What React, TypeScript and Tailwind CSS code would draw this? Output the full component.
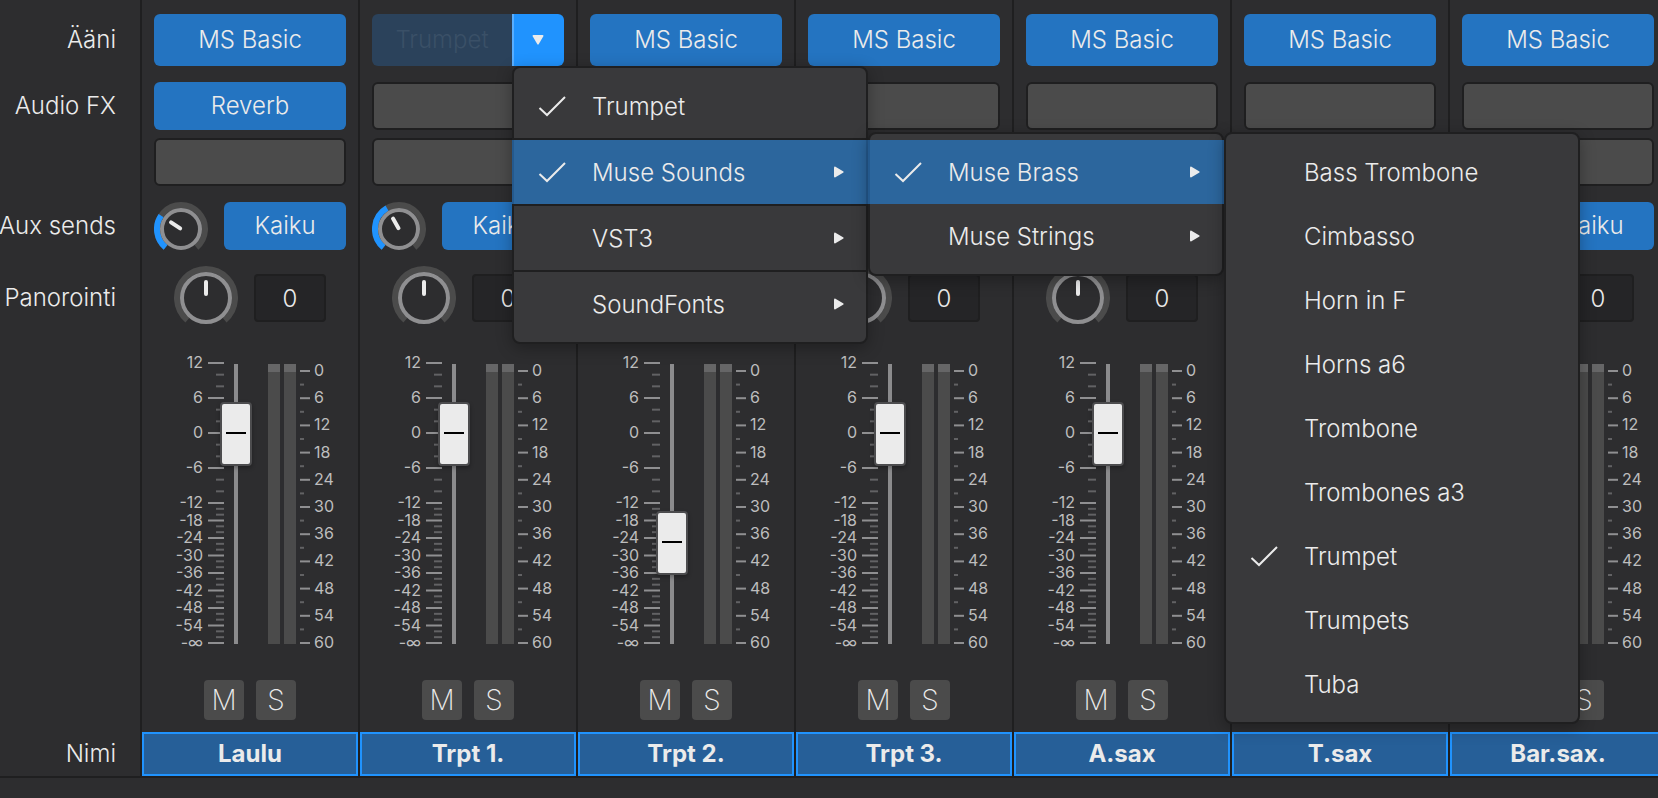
import { useState } from 'react';
import clsx from 'clsx';

interface ChannelData {
  name: string;
  sound: string;
  fx: string[];
  send: number;
  volume: number;
  pan: number;
  open?: boolean;
}

interface MenuEntry {
  label: string;
  checked?: boolean;
  highlighted?: boolean;
  submenu?: boolean;
}

const channels: ChannelData[] = [
  { name: 'Laulu', sound: 'MS Basic', fx: ['Reverb', ''], send: -56, volume: 75, pan: 0 },
  { name: 'Trpt 1.', sound: 'Trumpet', fx: ['', ''], send: -30, volume: 75, pan: 0, open: true },
  { name: 'Trpt 2.', sound: 'MS Basic', fx: ['', ''], send: -30, volume: 36, pan: 0 },
  { name: 'Trpt 3.', sound: 'MS Basic', fx: ['', ''], send: -30, volume: 75, pan: 0 },
  { name: 'A.sax', sound: 'MS Basic', fx: ['', ''], send: -30, volume: 75, pan: 0 },
  { name: 'T.sax', sound: 'MS Basic', fx: ['', ''], send: -30, volume: 75, pan: 0 },
  { name: 'Bar.sax.', sound: 'MS Basic', fx: ['', ''], send: -30, volume: 75, pan: 0 },
];

const soundMenu: MenuEntry[] = [
  { label: 'Trumpet', checked: true },
  { label: 'Muse Sounds', checked: true, highlighted: true, submenu: true },
  { label: 'VST3', submenu: true },
  { label: 'SoundFonts', submenu: true },
];

const museMenu: MenuEntry[] = [
  { label: 'Muse Brass', checked: true, highlighted: true, submenu: true },
  { label: 'Muse Strings', submenu: true },
];

const brassMenu: MenuEntry[] = [
  { label: 'Bass Trombone' },
  { label: 'Cimbasso' },
  { label: 'Horn in F' },
  { label: 'Horns a6' },
  { label: 'Trombone' },
  { label: 'Trombones a3' },
  { label: 'Trumpet', checked: true },
  { label: 'Trumpets' },
  { label: 'Tuba' },
];

// The fader scale is twice as dense below -12 dB
const faderMarks = ['12', '6', '0', '-6', '-12', '-18', '-24', '-30', '-36', '-42', '-48', '-54', '-∞'].map(
  (label, i) => ({ label, y: i <= 4 ? i * 35 : 140 + (i - 4) * 17.5 })
);

const meterMarks = Array.from({ length: 11 }, (_, i) => ({ label: String(i * 6), y: i * 27.2 }));

function polar(cx: number, cy: number, r: number, deg: number) {
  const rad = ((deg - 90) * Math.PI) / 180;
  return `${(cx + r * Math.cos(rad)).toFixed(2)} ${(cy + r * Math.sin(rad)).toFixed(2)}`;
}

function arc(c: number, r: number, from: number, to: number) {
  const large = to - from > 180 ? 1 : 0;
  return `M${polar(c, c, r, from)} A${r} ${r} 0 ${large} 1 ${polar(c, c, r, to)}`;
}

function SendKnob({ angle, label }: { angle: number; label: string }) {
  return (
    <svg
      width="54"
      height="54"
      viewBox="0 0 54 54"
      fill="none"
      role="slider"
      aria-label={label}
      aria-valuenow={angle}
      className="shrink-0"
    >
      <path d={arc(27, 24, -140, 140)} stroke="#4b4b4b" strokeWidth="6" />
      <path d={arc(27, 24, -140, angle)} stroke="#2093fe" strokeWidth="6" />
      <circle cx="27" cy="27" r="19" stroke="#8f8f91" strokeWidth="4" />
      <path
        d="M27 15V26"
        transform={`rotate(${angle} 27 27)`}
        stroke="#ebebeb"
        strokeWidth="4"
        strokeLinecap="round"
      />
    </svg>
  );
}

function PanKnob({ value, label }: { value: number; label: string }) {
  return (
    <svg
      width="64"
      height="64"
      viewBox="0 0 64 64"
      fill="none"
      role="slider"
      aria-label={label}
      aria-valuenow={value}
      className="shrink-0"
    >
      <path d={arc(32, 29, -140, 140)} stroke="#4b4b4b" strokeWidth="6" />
      <circle cx="32" cy="32" r="24" stroke="#8f8f91" strokeWidth="4" />
      <path d="M32 16V28" stroke="#ebebeb" strokeWidth="4" strokeLinecap="round" />
    </svg>
  );
}

function FaderScale() {
  return (
    <svg width="62" height="344" viewBox="0 0 62 344" className="shrink-0 text-base font-normal">
      {faderMarks.map(({ label, y }, i) => {
        const step = i < 4 ? 35 : 17.5;
        return (
          <g key={label}>
            <text x="41" y={y + 36} textAnchor="end" fill="#bdbdbe">
              {label}
            </text>
            <rect x="46" y={y + 30} width="16" height="2" fill="#8f8f91" />
            {i < 12 &&
              [1, 2].map((n) => (
                <rect key={n} x="54" y={y + 30 + (step * n) / 3} width="8" height="2" fill="#626264" />
              ))}
          </g>
        );
      })}
    </svg>
  );
}

function MeterScale() {
  return (
    <svg width="38" height="344" viewBox="0 0 38 344" className="shrink-0 text-base font-normal">
      {meterMarks.map(({ label, y }, i) => (
        <g key={label}>
          <rect x="0" y={y + 38} width="10" height="2" fill="#8f8f91" />
          {i < 10 && <rect x="0" y={y + 51.6} width="4" height="2" fill="#626264" />}
          <text x="14" y={y + 44} fill="#bdbdbe">
            {label}
          </text>
        </g>
      ))}
    </svg>
  );
}

function Meter() {
  return (
    <div className="h-[280px] w-3 bg-[#4b4b4b]">
      <div className="h-2 bg-[#666667]" />
    </div>
  );
}

function Fader({ value, label }: { value: number; label: string }) {
  const [volume, setVolume] = useState(value);

  return (
    <input
      type="range"
      aria-label={label}
      value={volume}
      onChange={(e) => setVolume(Number(e.target.value))}
      className="relative -ml-1 h-[344px] w-8 appearance-none bg-[linear-gradient(#8b8b8d,#8b8b8d)] bg-[length:4px_280px] bg-center bg-no-repeat [direction:rtl] [writing-mode:vertical-lr] [&::-webkit-slider-thumb]:h-16 [&::-webkit-slider-thumb]:w-8 [&::-webkit-slider-thumb]:appearance-none [&::-webkit-slider-thumb]:rounded-sm [&::-webkit-slider-thumb]:border-2 [&::-webkit-slider-thumb]:border-[#4c4c4e] [&::-webkit-slider-thumb]:bg-[#ebebeb] [&::-webkit-slider-thumb]:bg-[linear-gradient(#000,#000)] [&::-webkit-slider-thumb]:bg-[length:20px_2px] [&::-webkit-slider-thumb]:bg-[position:center_28px] [&::-webkit-slider-thumb]:bg-no-repeat [&::-webkit-slider-thumb]:shadow-[0_2px_4px_rgba(0,0,0,0.3)]"
    />
  );
}

function MenuRow({ entry }: { entry: MenuEntry }) {
  return (
    <button
      role="menuitem"
      className={clsx(
        'flex h-16 items-center text-left',
        entry.highlighted
          ? '-mx-0.5 border-x-2 border-[#24598d] bg-[#2c669d]'
          : 'bg-transparent'
      )}
    >
      <span className="flex w-[78px] shrink-0 pl-6">
        {entry.checked && (
          <svg width="28" height="22" viewBox="0 0 28 22" fill="none" stroke="#ebebeb" strokeWidth="2">
            <path d="M1.5 13L9 20L27 2" />
          </svg>
        )}
      </span>
      <span className="flex-1 pt-0.5">{entry.label}</span>
      {entry.submenu && (
        <svg width="10" height="12" viewBox="0 0 10 12" fill="#ebebeb" className="mr-[22px]">
          <path d="M1 0.5L9.5 5.5V6.5L1 11.5Q0 11.5 0 10.5V1.5Q0 0.5 1 0.5Z" />
        </svg>
      )}
    </button>
  );
}

function Menu({ entries, divided, className }: { entries: MenuEntry[]; divided?: boolean; className?: string }) {
  return (
    <div
      role="menu"
      className={clsx(
        'flex w-[356px] shrink-0 flex-col rounded-lg border-2 border-[#1f1f20] bg-[#39393b] py-1.5 shadow-[0_4px_16px_rgba(0,0,0,0.3)]',
        className
      )}
    >
      {entries.map((entry, i) => (
        <div key={entry.label} className="flex flex-col">
          {divided && i > 0 && <div role="separator" className="h-0.5 bg-[#1f1f20]" />}
          <MenuRow entry={entry} />
        </div>
      ))}
    </div>
  );
}

function SoundSelector({ sound, open }: { sound: string; open?: boolean }) {
  if (!open) {
    return <button className="h-[52px] rounded-md bg-[#2474c1]">{sound}</button>;
  }

  return (
    <div className="flex h-[52px]">
      <button className="flex-1 rounded-l-md bg-[#2b425b] text-[#3a5067]">{sound}</button>
      <div className="relative">
        <button
          aria-label="Choose sound"
          aria-expanded="true"
          className="flex h-full w-[52px] items-center justify-center rounded-r-md border-l-2 border-[#58aeff] bg-[#2093fe] pr-0.5"
        >
          <svg width="12" height="10" viewBox="0 0 12 10" fill="#ebebeb">
            <path d="M0.5 1L5.5 9.5H6.5L11.5 1Q11.5 0 10.5 0H1.5Q0.5 0 0.5 1Z" />
          </svg>
        </button>

        {/* Menu cascade */}
        <div className="absolute top-full left-0 z-20 flex items-start text-[#ebebeb]">
          <Menu entries={soundMenu} divided />
          <Menu entries={museMenu} className="mt-[66px]" />
          <Menu entries={brassMenu} className="mt-[66px]" />
        </div>
      </div>
    </div>
  );
}

function Channel({ channel }: { channel: ChannelData }) {
  const [pan, setPan] = useState(String(channel.pan));

  return (
    <section aria-label={channel.name} className="flex w-[218px] shrink-0 flex-col border-l-2 border-[#1f1f20]">
      <div className="flex flex-col px-3 pt-3.5">
        <SoundSelector sound={channel.sound} open={channel.open} />

        {/* Effects */}
        <div className="mt-4 flex flex-col gap-2">
          {channel.fx.map((fx, i) => (
            <button
              key={i}
              aria-label={fx || `Empty effect slot ${i + 1}`}
              className={clsx(
                'h-12 rounded-md',
                fx ? 'bg-[#2474c1]' : 'border-2 border-[#1f1f20] bg-[#4b4b4b]'
              )}
            >
              {fx}
            </button>
          ))}
        </div>

        {/* Aux send */}
        <div className="mt-4 flex h-12 items-start gap-4">
          <SendKnob angle={channel.send} label={`${channel.name} send level`} />
          <button className="h-12 flex-1 rounded-md bg-[#2474c1]">Kaiku</button>
        </div>

        {/* Pan */}
        <div className="mt-4 flex items-center justify-center gap-4">
          <PanKnob value={channel.pan} label={`${channel.name} pan`} />
          <input
            aria-label={`${channel.name} pan value`}
            value={pan}
            onChange={(e) => setPan(e.target.value)}
            className="h-12 w-[72px] rounded border-2 border-[#1f1f20] bg-[#252527] text-center"
          />
        </div>

        {/* Volume */}
        <div className="mt-0.5 flex items-center justify-center">
          <FaderScale />
          <Fader value={channel.volume} label={`${channel.name} volume`} />
          <div className="mr-1 ml-4 flex gap-1">
            <Meter />
            <Meter />
          </div>
          <MeterScale />
        </div>

        <div className="mt-1 flex justify-center gap-3 text-[28px] font-extralight">
          <button aria-label="Mute" className="flex size-10 items-center justify-center rounded bg-[#4b4b4b] pt-0.5">
            M
          </button>
          <button aria-label="Solo" className="flex size-10 items-center justify-center rounded bg-[#4b4b4b] pt-0.5">
            S
          </button>
        </div>
      </div>

      <div className="mt-3 flex h-11 items-center justify-center border-2 border-[#2093fe] bg-[#265f98] font-bold">
        {channel.name}
      </div>
    </section>
  );
}

function RowLabels() {
  return (
    <div className="flex w-[140px] shrink-0 flex-col items-end pt-3.5 pr-6 whitespace-nowrap">
      <div className="flex h-[52px] items-center">Ääni</div>
      <div className="mt-4 flex h-12 items-center">Audio FX</div>
      <div className="mt-[72px] flex h-12 items-center">Aux sends</div>
      <div className="mt-4 flex h-16 items-center">Panorointi</div>
      <div className="mt-auto flex h-11 items-center">Nimi</div>
    </div>
  );
}

export default function App() {
  return (
    <main className="min-h-screen overflow-hidden bg-[#2d2d2f] font-['Inter',sans-serif] text-2xl font-[350] text-[#ebebeb]">
      <div className="flex border-b-2 border-[#1f1f20]">
        <RowLabels />
        {channels.map((channel) => (
          <Channel key={channel.name} channel={channel} />
        ))}
      </div>
    </main>
  );
}
